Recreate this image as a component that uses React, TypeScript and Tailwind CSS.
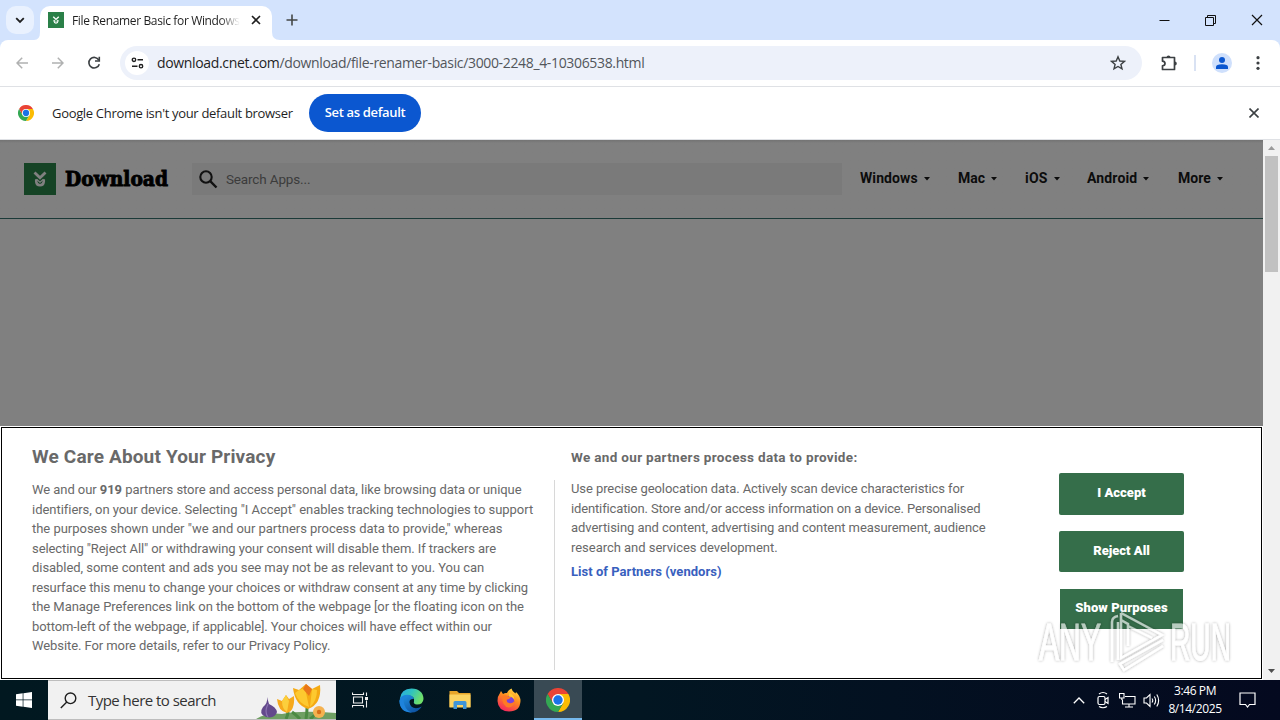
import React from 'react';

const UI_FONT = "font-['Open_Sans','Noto_Sans',sans-serif]";

const ChromeIcon: React.FC<{ size: number }> = ({ size }) => (
  <svg width={size} height={size} viewBox="0 0 48 48">
    <path d="M24 12 H44.8 A24 24 0 0 0 3.2 12 L13.6 30 Z" fill="#ea4335" />
    <path d="M34.4 30 L24 48 A24 24 0 0 0 44.8 12 H24 Z" fill="#fbbc04" />
    <path d="M13.6 30 L3.2 12 A24 24 0 0 0 24 48 L34.4 30 Z" fill="#34a853" />
    <circle cx="24" cy="24" r="12" fill="#fff" />
    <circle cx="24" cy="24" r="9.4" fill="#1a73e8" />
  </svg>
);

const DownloadMark: React.FC<{ size: number; bg: string; fg: string }> = ({ size, bg, fg }) => (
  <svg width={size} height={size} viewBox="0 0 32 32" className="shrink-0">
    <rect width="32" height="32" fill={bg} />
    <path d="M10.5 9.5 L16 14.8 L21.5 9.5" fill="none" stroke={fg} strokeWidth="2.8" />
    <path d="M12.2 16.2 V18.500 Q12.600 22.300 16 22.300 Q19.400 22.300 19.800 18.500 V16.200" fill="none" stroke={fg} strokeWidth="2.500" />
    <path d="M12.500 16.200 L16 19.200 L19.500 16.200" fill="none" stroke={fg} strokeWidth="1.200" />
  </svg>
);

const TabStrip = () => (
  <div className="flex h-10 shrink-0 bg-[#d3e3fd]">
    <div className="ml-[6px] mt-[6px] flex h-7 w-7 items-center justify-center rounded-[10px] bg-[#e9f1fe]">
      <svg width="10" height="7" viewBox="0 0 10 7" fill="none" stroke="#1f1f1f" strokeWidth="1.8">
        <path d="M1.200 1.200 L5 5 L8.800 1.200" />
      </svg>
    </div>
    <div className="flex w-[248px] items-end">
      <svg width="6" height="8" viewBox="0 0 6 8"><path d="M6 0 V8 H0 Q6 8 6 0" fill="#fff" /></svg>
      <div className="flex h-[34px] w-[232px] items-center rounded-t-[10px] bg-white pb-[6px] pl-2 pr-[11px]">
        <DownloadMark size={16} bg="#2a8048" fg="#fff" />
        <span className="ml-2 mt-px w-[168px] overflow-hidden whitespace-nowrap bg-linear-to-r from-[#1f1f1f] from-88% to-transparent bg-clip-text text-[12px] leading-4 tracking-[-0.36px] text-transparent">
          File Renamer Basic for Windows
        </span>
        <svg className="ml-auto" width="10" height="10" viewBox="0 0 10 10" stroke="#1f1f1f" strokeWidth="1.600">
          <path d="M1 1 L9 9 M9 1 L1 9" />
        </svg>
      </div>
      <svg width="8" height="8" viewBox="0 0 8 8"><path d="M0 0 V8 H8 Q0 8 0 0" fill="#fff" /></svg>
    </div>
    <svg className="ml-[4px] mt-[14px]" width="12" height="12" viewBox="0 0 12 12" stroke="#444746" strokeWidth="1.600">
      <path d="M6 0.500 V11.500 M0.500 6 H11.500" />
    </svg>
    <div className="ml-auto mr-[17px] flex h-10 items-center gap-[35px]">
      <svg width="11" height="11" viewBox="0 0 11 11" fill="none" stroke="#111"><path d="M0.500 5.500 H10.500" /></svg>
      <svg width="11" height="11" viewBox="0 0 11 11" fill="none" stroke="#111">
        <path d="M0.500 2.500 H8.500 V10.500 H0.500 Z M2.500 2.500 V0.500 H10.500 V8.500 H8.500" />
      </svg>
      <svg width="12" height="12" viewBox="0 0 12 12" fill="none" stroke="#111" strokeWidth="1.200"><path d="M1 1 L11 11 M11 1 L1 11" /></svg>
    </div>
  </div>
);

const Toolbar = () => (
  <div className="bg-[#d3e3fd]">
    <div className="flex h-[46px] shrink-0 items-center rounded-t-[8px] bg-white">
      <svg className="ml-4" width="12" height="12" viewBox="0 0 12 12" fill="none" stroke="#b0b1b1" strokeWidth="1.500">
        <path d="M12 6 H1 M6.200 0.800 L1 6 L6.200 11.200" />
      </svg>
      <svg className="ml-6" width="12" height="12" viewBox="0 0 12 12" fill="none" stroke="#b0b1b1" strokeWidth="1.500">
        <path d="M0 6 H11 M5.800 0.800 L11 6 L5.800 11.200" />
      </svg>
      <svg className="ml-[23px]" width="14" height="14" viewBox="0 0 14 14" fill="none" stroke="#3c4043" strokeWidth="1.600">
        <path d="M11.800 4 A5.300 5.300 0 1 0 12.300 8.200" />
        <path d="M12.300 0.800 V5 H8" />
      </svg>
      <div className="ml-[19px] flex h-[34px] w-[1022px] items-center rounded-full bg-[#edf1fa] pl-[5px] pr-4">
        <div className="flex h-6 w-6 items-center justify-center rounded-full bg-white">
          <svg width="13" height="12" viewBox="0 0 13 12" fill="none" stroke="#1f1f1f" strokeWidth="1.400">
            <circle cx="3" cy="2.800" r="1.700" />
            <path d="M6.500 2.800 H12 M1 9.200 H6.500" />
            <circle cx="10" cy="9.200" r="1.700" />
          </svg>
        </div>
        <span className="ml-2 whitespace-nowrap text-[14px] leading-5 tracking-[-0.345px] text-[#52565b]">
          <span className="text-[#1f1f1f]">download.cnet.com</span>/download/file-renamer-basic/3000-2248_4-10306538.html
        </span>
        <svg className="ml-auto" width="16" height="16" viewBox="0 0 16 16" fill="none" stroke="#3c4043" strokeWidth="1.400">
          <path d="M8 1.800 L9.800 6 L14.400 6.400 L10.900 9.400 L12 13.900 L8 11.500 L4 13.900 L5.100 9.400 L1.600 6.400 L6.200 6 Z" />
        </svg>
      </div>
      <svg className="ml-[18px]" width="18" height="18" viewBox="0 0 18 18">
        <path d="M2.500 3.500 H14.500 V15.500 H2.500 V11.800 Q5 11.500 5 9.500 Q5 7.500 2.500 7.200 Z" fill="none" stroke="#3c4043" strokeWidth="1.700" strokeLinejoin="round" />
        <path d="M6.500 3.500 A2 2 0 0 1 10.500 3.500 Z M14.800 7.500 A2 2 0 0 1 14.800 11.500 Z" fill="#3c4043" />
      </svg>
      <div className="ml-4 h-4 w-[2px] bg-[#d9e2f3]" />
      <svg className="ml-4" width="20" height="20" viewBox="0 0 20 20">
        <circle cx="10" cy="10" r="10" fill="#cfe0fc" />
        <circle cx="10" cy="7" r="3" fill="#0b57d0" />
        <path d="M4 16 V14 Q4 11.300 10 11.300 Q16 11.300 16 14 V16 Z" fill="#0b57d0" />
      </svg>
      <svg className="ml-[24px]" width="4" height="14" viewBox="0 0 4 14" fill="#3c4043">
        <circle cx="2" cy="1.700" r="1.600" />
        <circle cx="2" cy="7" r="1.600" />
        <circle cx="2" cy="12.300" r="1.600" />
      </svg>
    </div>
  </div>
);

const InfoBar = () => (
  <div className="flex h-[54px] shrink-0 items-center border-y border-[#dfe1e5] bg-white">
    <div className="ml-[18px]"><ChromeIcon size={16} /></div>
    <span className="ml-[18px] w-[257px] whitespace-nowrap text-[13px] leading-5 tracking-[-0.32px] text-[#1f1f1f]">
      Google Chrome isn't your default browser
    </span>
    <button className="h-[38px] w-28 whitespace-nowrap rounded-full bg-[#0b57d0] text-[13px] font-semibold tracking-[-0.34px] text-white">
      Set as default
    </button>
    <svg className="ml-auto mr-[21px]" width="10" height="10" viewBox="0 0 10 10" stroke="#3c4043" strokeWidth="1.600">
      <path d="M0.500 0.500 L9.500 9.500 M9.500 0.500 L0.500 9.500" />
    </svg>
  </div>
);

const NAV = [
  { label: 'Windows', cls: 'w-[98px] tracking-[0.1px]' },
  { label: 'Mac', cls: 'w-[67px]' },
  { label: 'iOS', cls: 'w-[62px] tracking-[0.2px]' },
  { label: 'Android', cls: 'w-[91px] tracking-[0.15px]' },
  { label: 'More', cls: 'w-[85px]' },
];

const SiteHeader = () => (
  <div className="flex h-[79px] shrink-0 items-center border-b border-[#1b3a38] bg-linear-to-b from-[#737373] to-[#808080] to-4% font-['Roboto',sans-serif]">
    <div className="ml-6 flex items-center">
      <DownloadMark size={32} bg="#154325" fg="#808080" />
      <svg className="ml-[7px] overflow-visible" width="108" height="32" viewBox="0 0 108 32">
        <text x="2" y="23" textLength="103" lengthAdjust="spacingAndGlyphs" fontFamily="DejaVu Serif, serif" fontWeight="700" fontSize="20" fill="#000" stroke="#000" strokeWidth="0.900">
          Download
        </text>
      </svg>
    </div>
    <div className="ml-[21px] flex h-8 w-[650px] items-center bg-[#7a7a7a] pl-[7px]">
      <svg width="19" height="19" viewBox="0 0 19 19" fill="none" stroke="#111" strokeWidth="2.100">
        <circle cx="7" cy="7" r="5.700" />
        <path d="M11.200 11.200 L17.500 17.500" strokeWidth="2.400" />
      </svg>
      <span className="ml-2 text-[13.500px] tracking-[-0.15px] text-[#3c3c3c]">Search Apps...</span>
    </div>
    <div className="mb-px ml-[18px] flex text-[14px] font-bold text-[#0c0c0c]">
      {NAV.map((item) => (
        <div key={item.label} className={`flex items-center ${item.cls}`}>
          {item.label}
          <svg className="ml-[6px] mt-px" width="6" height="4" viewBox="0 0 6 4"><path d="M0 0 H6 L3 3.500 Z" fill="#0c0c0c" /></svg>
        </div>
      ))}
    </div>
  </div>
);

const LEFT_LINES = [
  { text: 'identifiers, on your device. Selecting "I Accept" enables tracking technologies to support', cls: 'tracking-[-0.035px]' },
  { text: 'the purposes shown under "we and our partners process data to provide," whereas', cls: 'tracking-[-0.025px]' },
  { text: 'selecting "Reject All" or withdrawing your consent will disable them. If trackers are', cls: 'tracking-[-0.08px]' },
  { text: 'disabled, some content and ads you see may not be as relevant to you. You can', cls: 'tracking-[-0.05px]' },
  { text: 'resurface this menu to change your choices or withdraw consent at any time by clicking', cls: 'tracking-[-0.09px]' },
  { text: 'the Manage Preferences link on the bottom of the webpage [or the floating icon on the', cls: 'tracking-[-0.045px]' },
  { text: 'bottom-left of the webpage, if applicable]. Your choices will have effect within our', cls: 'tracking-[-0.09px]' },
  { text: 'Website. For more details, refer to our Privacy Policy.', cls: 'tracking-[-0.08px]' },
];

const RIGHT_LINES = [
  { text: 'Use precise geolocation data. Actively scan device characteristics for', cls: 'tracking-[-0.085px]' },
  { text: 'identification. Store and/or access information on a device. Personalised', cls: 'tracking-[-0.14px]' },
  { text: 'advertising and content, advertising and content measurement, audience', cls: 'tracking-[-0.07px]' },
  { text: 'research and services development.', cls: 'tracking-[-0.03px]' },
];

const ConsentPanel = () => (
  <div className="relative h-[254px] shrink-0 bg-white p-px">
    <div className="flex h-[252px] border border-black font-['Roboto',sans-serif] text-[#696969]">
      <div className="w-[522px] shrink-0 pl-[30px] pt-[17px]">
        <h2 className="whitespace-nowrap text-[19px] font-bold leading-6 tracking-[0.16px]">We Care About Your Privacy</h2>
        <div className="mt-[11px] whitespace-nowrap text-[13px] leading-[19.500px]">
          <p className="tracking-[-0.06px]">We and our <b>919</b> partners store and access personal data, like browsing data or unique</p>
          {LEFT_LINES.map((line) => <p key={line.text} className={line.cls}>{line.text}</p>)}
        </div>
      </div>
      <div className="ml-[30px] mt-[52px] h-[190px] w-px shrink-0 bg-[#d8d8d8]" />
      <div className="w-[488px] shrink-0 whitespace-nowrap pl-4 pt-[19px]">
        <h3 className="text-[13.500px] font-bold leading-5 tracking-[0.33px]">We and our partners process data to provide:</h3>
        <div className="mt-[12px] text-[13px] leading-[19.500px]">
          {RIGHT_LINES.map((line) => <p key={line.text} className={line.cls}>{line.text}</p>)}
        </div>
        <a className="mt-[5px] block text-[13px] font-bold leading-5 tracking-[0.03px] text-[#3860be]">List of Partners (vendors)</a>
      </div>
      <div className="ml-4 flex flex-col items-center gap-4 pt-[45px] text-[13px] font-black text-white">
        <button className="h-[42px] w-[125px] rounded-[2px] bg-[#356e4a] pb-[2px]">I Accept</button>
        <button className="h-[41px] w-[125px] rounded-[2px] bg-[#356e4a] pb-[2px]">Reject All</button>
        <button className="mt-px h-10 w-[123px] bg-[#356e4a] pb-[2px] tracking-[0.1px]">Show Purposes</button>
      </div>
    </div>
    <svg className="absolute bottom-0 left-[1030px]" width="214" height="80" viewBox="0 0 214 80">
      <defs>
        <filter id="wm" x="-10%" y="-20%" width="120%" height="140%">
          <feDropShadow dx="0" dy="0" stdDeviation="1.800" floodColor="#000" floodOpacity="0.550" />
        </filter>
      </defs>
      <g filter="url(#wm)" opacity="0.650" fill="#fff" stroke="#fff" fontFamily="Liberation Sans, sans-serif" fontSize="52">
        <text x="9" y="60" strokeWidth="0.800" textLength="62" lengthAdjust="spacingAndGlyphs">ANY</text>
        <text x="140" y="60" strokeWidth="0.800" textLength="61" lengthAdjust="spacingAndGlyphs">RUN</text>
        <path d="M82 62 V22 Q82 17 88 16 M88 60 V22 M91 13 L132 35 L91 58 V13 M98 26 L122 38 M91 20 L98 24 V46 M133 40 L90 64 L94 70 L133 46" fill="none" strokeWidth="2.400" />
      </g>
    </svg>
  </div>
);

const Scrollbar = () => (
  <div className="flex w-[17px] shrink-0 flex-col items-center bg-[#f1f1f1]">
    <svg className="mt-[6px]" width="7" height="4" viewBox="0 0 7 4"><path d="M0 4 L3.500 0 L7 4 Z" fill="#9b9b9b" /></svg>
    <div className="mt-[6px] h-[116px] w-[13px] bg-[#c1c1c1]" />
    <svg className="mb-[7px] mt-auto" width="7" height="4" viewBox="0 0 7 4"><path d="M0 0 L3.500 4 L7 0 Z" fill="#505050" /></svg>
  </div>
);

const Flowers = () => (
  <svg width="80" height="38" viewBox="0 0 80 38">
    <path d="M0 38 Q12 31 26 33 Q44 29 80 32 V38 Z" fill="#6f9f63" />
    <path d="M30 38 Q32 34 32 31 M50 38 Q51 32 51 27 M44 38 Q39 33 36 31 M54 38 Q60 34 62 29" fill="none" stroke="#4c8a43" strokeWidth="3" />
    <path d="M11 16 Q12 22 7 26 Q2 33 10 36 Q19 38 21 31 Q20 26 13 23 Z" fill="#63498c" />
    <path d="M12 23 Q8 31 12 36" fill="none" stroke="#8a72b0" strokeWidth="1.200" />
    <path d="M21 18 L26 20 L30 14 L33 18 L38 15 Q39 30 31 32 Q22 30 21 18 Z" fill="#f6a91c" />
    <path d="M26 20 L30 14 L33 20 L31 31 Q26 28 26 20 Z" fill="#fccf3c" />
    <path d="M37 7 L43 9 L50 3 L56 8 L64 4 Q66 23 52 28 Q39 24 37 7 Z" fill="#f5aa13" />
    <path d="M39 12 L43 9 L49 7 L53 26 Q43 23 39 12 Z M56 8 L61 9 Q61 20 54 26 Z" fill="#fdc92f" />
    <path d="M47 8 L50 3 L56 8 L53 15 Z" fill="#e9761a" />
    <circle cx="63" cy="31" r="6" fill="#f5b250" />
    <circle cx="63" cy="31" r="2.200" fill="#d9701a" />
  </svg>
);

const Taskbar = () => (
  <div className="flex h-10 shrink-0 bg-linear-to-r from-[#011820] via-[#021622] to-[#04091f] text-white">
    <div className="flex w-12 items-center justify-center">
      <svg width="16" height="16" viewBox="0 0 16 16" fill="#fff">
        <path d="M0 2.200 L6.700 1.300 V7.600 H0 Z M7.400 1.200 L16 0 V7.600 H7.400 Z M0 8.300 H6.700 V14.700 L0 13.800 Z M7.400 8.300 H16 V16 L7.400 14.800 Z" />
      </svg>
    </div>
    <div className="flex w-72 items-center border-y border-[#bdbdbd] bg-[#f1f1f1]">
      <svg className="ml-3" width="17" height="17" viewBox="0 0 17 17" fill="none" stroke="#1f1f1f" strokeWidth="1.400">
        <circle cx="10.500" cy="6.300" r="5.300" />
        <path d="M6.800 10 L0.800 16" />
      </svg>
      <span className="ml-[11px] whitespace-nowrap text-[15px] tracking-[-0.53px] text-[#333]">Type here to search</span>
      <div className="ml-auto"><Flowers /></div>
    </div>
    <div className="flex w-12 items-center justify-center">
      <svg width="17" height="16" viewBox="0 0 17 16" fill="none" stroke="#eee" strokeWidth="1.100">
        <path d="M0.500 0.500 V2.500 H11.500 V0.500 M1.500 5 H10.500 V11 H1.500 Z M0.500 15.500 V13.500 H11.500 V15.500 M14.500 0.500 V4 M14.500 8.500 V15.500" />
        <path d="M13 5 H16 V8 H13 Z" fill="#eee" stroke="none" />
      </svg>
    </div>
    <div className="flex w-[52px] items-center justify-center pl-[2px]">
      <svg width="25" height="25" viewBox="0 0 25 25">
        <defs>
          <linearGradient id="edgeTop" x1="0" y1="0" x2="1" y2="0.400">
            <stop offset="0" stopColor="#2ba8e5" />
            <stop offset="0.500" stopColor="#2fc2c0" />
            <stop offset="1" stopColor="#6fe06a" />
          </linearGradient>
          <linearGradient id="edgeLow" x1="0" y1="0" x2="0.800" y2="1">
            <stop offset="0" stopColor="#2196e8" />
            <stop offset="1" stopColor="#0d4f9e" />
          </linearGradient>
        </defs>
        <path d="M0.800 11 Q2 0.500 12.500 0.500 Q24 1 24.500 11 Q24 16.500 18 16.500 Q14 16 15 13.500 Q16 8 9.500 7.500 Q4 7.500 0.800 11 Z" fill="url(#edgeTop)" />
        <path d="M0.500 13 Q1 7 8 6.800 Q14 7 15 11 Q10 10.500 10.500 14.500 Q11.500 20 17 20.300 Q20 20.300 22.800 18.500 Q19 24.500 12.500 24.500 Q1 24 0.500 13 Z" fill="url(#edgeLow)" />
        <path d="M8 7 Q3 11 5.500 17 Q7.500 23 13 24.500 Q1 24.500 0.500 13 Q1 8 8 7 Z" fill="#1e83dc" />
      </svg>
    </div>
    <div className="flex w-12 items-center justify-center">
      <svg width="22" height="20" viewBox="0 0 22 20">
        <path d="M0.500 1 H8 L10 3 H21.500 V17 H0.500 Z" fill="#e8a62a" />
        <path d="M0.500 4.500 H21.500 V17.500 H0.500 Z" fill="#fcd462" />
        <path d="M4.500 19 V12.500 Q4.500 11 6 11 H16 Q17.500 11 17.500 12.500 V19 H14 V15 H8 V19 Z" fill="#3f95d8" />
      </svg>
    </div>
    <div className="flex w-[50px] items-center justify-center">
      <svg width="24" height="24" viewBox="0 0 24 24">
        <defs>
          <linearGradient id="foxBody" x1="0.800" y1="0" x2="0.300" y2="1">
            <stop offset="0" stopColor="#ffe043" />
            <stop offset="0.450" stopColor="#ff8a1f" />
            <stop offset="1" stopColor="#f5245f" />
          </linearGradient>
        </defs>
        <path d="M3 5 L4 3 L6 6 Q8 4.500 10 5 Q11 2 14.500 0.500 Q15 3.500 18.500 5.500 L19 4 Q23.500 8 23.500 13 Q23 23.500 12 23.500 Q1 23 0.500 13 Q0.500 8 3 5 Z" fill="url(#foxBody)" />
        <circle cx="12" cy="13.500" r="5.300" fill="#7a42dc" />
        <path d="M5 8 Q9 6.500 11 8.500 L14 9 Q12.500 11.300 10 11.500 Q9 14 12 15 Q15 16 17.500 13 Q18 18.500 12 19.500 Q5 19 5 8 Z" fill="#ff7a24" />
        <path d="M12 5 Q17 6 17.500 12 Q16 8.500 12 8.500 Z" fill="#ffc932" />
      </svg>
    </div>
    <div className="flex w-12 items-center justify-center border-b-2 border-[#76b9ed] bg-[#394a54] pt-[2px]"><ChromeIcon size={24} /></div>
    <div className="ml-auto flex items-center">
      <svg width="12" height="7" viewBox="0 0 12 7" fill="none" stroke="#fff" strokeWidth="1.300"><path d="M0.800 6.300 L6 1 L11.200 6.300" /></svg>
      <svg className="ml-3" width="12" height="18" viewBox="0 0 12 18" fill="none" stroke="#fff" strokeWidth="1.200">
        <rect x="1" y="5.500" width="7" height="8" rx="1.500" />
        <path d="M8 8.500 L11 6.500 V12.500 L8 10.500 M2 3 Q6 0 10 3 M2 15.500 Q6 18 10 15.500" />
      </svg>
      <svg className="ml-[10px]" width="17" height="15" viewBox="0 0 17 15" fill="none" stroke="#fff" strokeWidth="1.100">
        <path d="M6 3.500 H16 V11 H3.500 V6.500 M6 14 H14 M10 11 V14 M0.500 0.500 H5 V5 H0.500 Z M2.800 5 V7" />
      </svg>
      <svg className="ml-[7px]" width="18" height="15" viewBox="0 0 18 15" fill="none" stroke="#fff" strokeWidth="1.100">
        <path d="M1 5 H3.500 L7 1.500 V13.500 L3.500 10 H1 Z M9 5.500 Q10.500 7.500 9 9.500 M11.300 3.500 Q14 7.500 11.300 11.500 M13.800 1.500 Q17.500 7.500 13.800 13.500" />
      </svg>
      <div className="ml-[6px] flex w-[56px] flex-col items-center whitespace-nowrap text-[12px] leading-[18px] tracking-[-0.4px]">
        <span>3:46 PM</span>
        <span>8/14/2025</span>
      </div>
      <svg className="ml-[16px] mr-6" width="17" height="16" viewBox="0 0 17 16" fill="none" stroke="#fff" strokeWidth="1.200">
        <path d="M1 1 H16 V12.500 H10.500 L8.500 15 L6.500 12.500 H1 Z" />
      </svg>
    </div>
  </div>
);

const App: React.FC = () => (
  <div className={`flex h-[720px] w-[1280px] flex-col overflow-hidden ${UI_FONT}`}>
    <TabStrip />
    <Toolbar />
    <InfoBar />
    <div className="flex h-[540px] shrink-0">
      <div className="flex w-[1263px] flex-col bg-[#808080]">
        <SiteHeader />
        <div className="flex-1" />
        <ConsentPanel />
      </div>
      <Scrollbar />
    </div>
    <Taskbar />
  </div>
);

export default App;
